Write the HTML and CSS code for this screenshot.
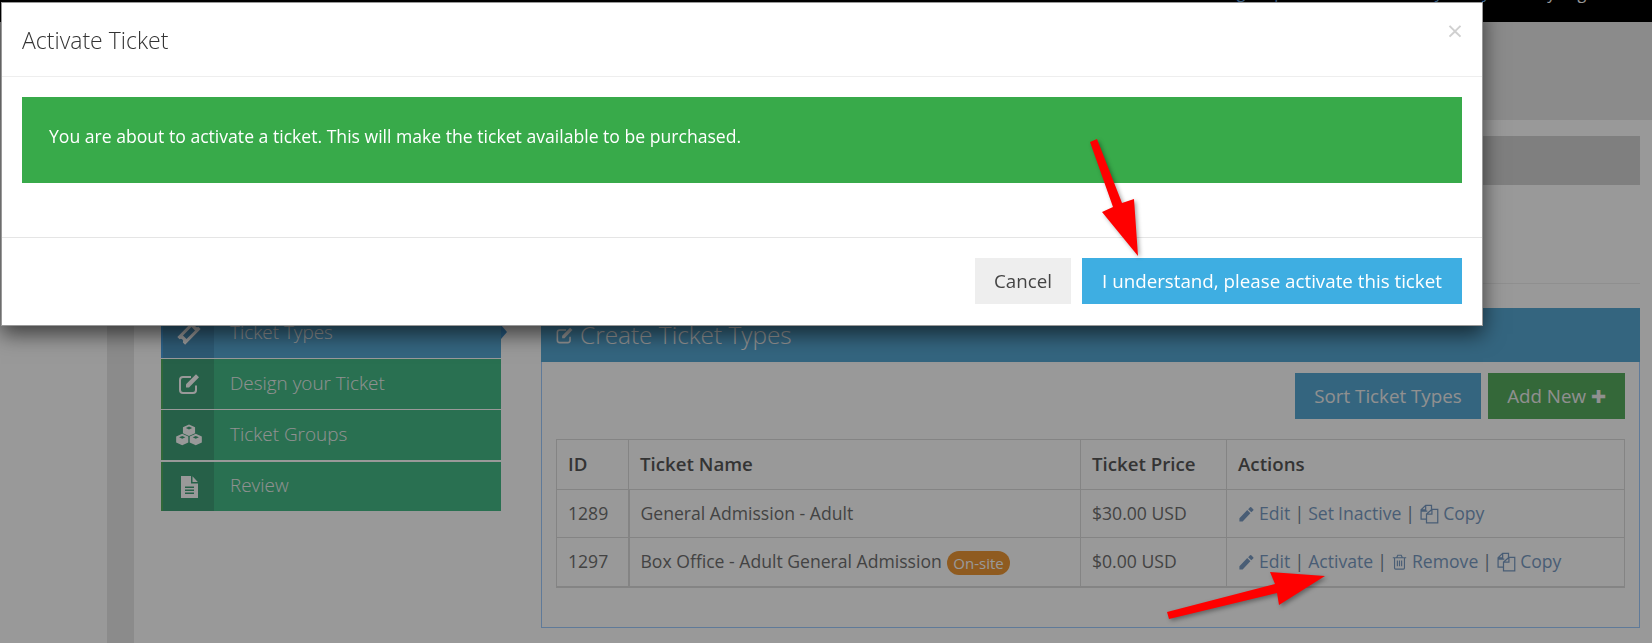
FILE: index.html
```html
<!DOCTYPE html>
<html>
  <head>
    <title>Create Ticket Types</title>
    <link rel="stylesheet" href="styles.css">
  </head>
  <body>
    <!-- Icon set -->
    <svg class="icon-defs" aria-hidden="true">
      <symbol id="i-edit" viewBox="0 0 24 24">
        <path d="M19 13.5V18a3 3 0 0 1-3 3H6a3 3 0 0 1-3-3V8a3 3 0 0 1 3-3h8" fill="none" stroke="currentColor" stroke-width="2"/>
        <path d="M19 2.2l3 3-10 10.3H9v-3.2z" fill="currentColor"/>
      </symbol>
      <symbol id="i-ticket" viewBox="0 0 24 24">
        <path transform="rotate(-45 12 12)" fill-rule="evenodd" fill="currentColor" d="M1 6.5h22v3.2a2.4 2.4 0 0 0 0 4.6v3.2H1v-3.2a2.4 2.4 0 0 0 0-4.6z M6 9.5h12v5H6z"/>
      </symbol>
      <symbol id="i-cubes" viewBox="0 0 24 24" preserveAspectRatio="none">
        <path fill="currentColor" fill-rule="evenodd" d="M12 1.5l5.2 2.7v6L12 13l-5.2-2.8v-6z M12 3.6L9.3 5 12 6.4 14.7 5z"/>
        <path fill="currentColor" fill-rule="evenodd" d="M6.2 10.8l5.2 2.7v6l-5.2 2.8L1 19.5v-6z M6.2 12.9l-2.7 1.4 2.7 1.4 2.7-1.4z"/>
        <path fill="currentColor" fill-rule="evenodd" d="M17.8 10.8l5.2 2.7v6l-5.2 2.8-5.2-2.8v-6z M17.8 12.9l-2.7 1.4 2.7 1.4 2.7-1.4z"/>
      </symbol>
      <symbol id="i-file" viewBox="0 0 24 24">
        <path fill="currentColor" fill-rule="evenodd" d="M4 1h10v7.5h7V23H4z M8 11.5h9V13H8z M8 14.5h9V16H8z M8 17.5h9V19H8z"/>
        <path fill="currentColor" d="M15.5 1.2l5.3 5.8h-5.3z"/>
      </symbol>
      <symbol id="i-pencil" viewBox="0 0 24 24">
        <path fill="currentColor" d="M2 18v4.500h4.500L17.500 11 13 6.500z M14.300 5.200l4.500 4.500 2.700-2.700a1.200 1.200 0 0 0 0-1.700l-2.800-2.800a1.200 1.200 0 0 0-1.700 0z"/>
      </symbol>
      <symbol id="i-files" viewBox="0 0 24 24">
        <path fill="none" stroke="currentColor" stroke-width="1.500" d="M10 8.500H2.500V7L8 1.500h7v5.500 M8 1.500V7H2.500 M2.500 8.500V18H9"/>
        <path fill="none" stroke="currentColor" stroke-width="1.500" d="M15.500 6.500H22.500V22.500H9V12z M15.500 6.500V12H9"/>
      </symbol>
      <symbol id="i-trash" viewBox="0 0 24 24">
        <path fill="none" stroke="currentColor" stroke-width="1.600" d="M2.500 6h19 M8 6l1.500-3.500h5L16 6 M5 6v14.500a1.500 1.500 0 0 0 1.500 1.500h11a1.500 1.500 0 0 0 1.500-1.500V6 M9 10v8 M12 10v8 M15 10v8"/>
      </symbol>
    </svg>

    <!-- Page behind the dialog -->
    <div class="topbar">
      <div class="topbar-links">
        <a href="#">Ticketing Help &nbsp; Contact Us &nbsp; Privacy Policy</a>
      </div>
      <div class="topbar-user">My Login</div>
    </div>
    <div class="subheader"></div>

    <div class="page">
      <div class="gutter"></div>
      <div class="strip"></div>
      <div class="content">
        <div class="band"></div>
        <div class="band-space"></div>

        <div class="builder">
          <ul class="steps">
            <li class="step step-active">
              <span class="step-icon"><svg class="icon-md"><use href="#i-ticket"/></svg></span>
              <span class="step-label">Ticket Types</span>
            </li>
            <li class="step">
              <span class="step-icon"><svg class="icon-md"><use href="#i-edit"/></svg></span>
              <span class="step-label">Design your Ticket</span>
            </li>
            <li class="step">
              <span class="step-icon"><svg class="icon-cubes"><use href="#i-cubes"/></svg></span>
              <span class="step-label">Ticket Groups</span>
            </li>
            <li class="step step-last">
              <span class="step-icon"><svg class="icon-md"><use href="#i-file"/></svg></span>
              <span class="step-label">Review</span>
            </li>
          </ul>

          <div class="panel">
            <div class="panel-heading">
              <svg class="icon-heading"><use href="#i-edit"/></svg>
              <span>Create Ticket Types</span>
            </div>
            <div class="panel-body">
              <div class="toolbar">
                <button class="btn btn-sort">Sort Ticket Types</button>
                <button class="btn btn-add">Add New <span class="plus">&#10010;</span></button>
              </div>
              <table class="tickets">
                <thead>
                  <tr>
                    <th class="col-id">ID</th>
                    <th class="col-name">Ticket Name</th>
                    <th class="col-price">Ticket Price</th>
                    <th>Actions</th>
                  </tr>
                </thead>
                <tbody>
                  <tr>
                    <td>1289</td>
                    <td>General Admission - Adult</td>
                    <td>$30.00 USD</td>
                    <td class="actions">
                      <a href="#"><svg class="icon-sm"><use href="#i-pencil"/></svg> Edit</a> |
                      <a href="#">Set Inactive</a> |
                      <a href="#"><svg class="icon-files"><use href="#i-files"/></svg> Copy</a>
                    </td>
                  </tr>
                  <tr>
                    <td>1297</td>
                    <td>Box Office - Adult General Admission <span class="badge">On-site</span></td>
                    <td>$0.00 USD</td>
                    <td class="actions">
                      <a href="#"><svg class="icon-sm"><use href="#i-pencil"/></svg> Edit</a> |
                      <a href="#">Activate</a> |
                      <a href="#"><svg class="icon-sm"><use href="#i-trash"/></svg> Remove</a> |
                      <a href="#"><svg class="icon-files"><use href="#i-files"/></svg> Copy</a>
                    </td>
                  </tr>
                </tbody>
              </table>
            </div>
          </div>
        </div>
      </div>
    </div>

    <!-- Dialog -->
    <div class="backdrop"></div>
    <div class="modal">
      <div class="modal-header">
        <h4 class="modal-title">Activate Ticket</h4>
        <span class="modal-close">&times;</span>
      </div>
      <div class="modal-body">
        <div class="alert">You are about to activate a ticket. This will make the ticket available to be purchased.</div>
      </div>
      <div class="modal-footer">
        <button class="btn btn-cancel">Cancel</button>
        <button class="btn btn-confirm">I understand, please activate this ticket</button>
      </div>
    </div>

    <!-- Red arrows drawn on the screenshot -->
    <svg class="arrows" viewBox="0 0 1652 643">
      <polygon points="1090,142 1097,139 1122,203 1134,199 1138,256 1102,212 1113,207"/>
      <polygon points="1167,612 1275,584 1270,572 1325,576 1279,605 1277,593 1169,619"/>
    </svg>
  </body>
</html>
```

FILE: styles.css
```css
* {
  box-sizing: border-box;
}

html,
body {
  height: 643px;
}

body {
  margin: 0;
  overflow: hidden;
  background-color: #fff;
  color: #707070;
  font-family: "Open Sans", "Liberation Sans", sans-serif;
  font-size: 17.6px;
  line-height: 1.42857;
}

.icon-defs {
  display: none;
}

/* Top bar */
.topbar {
  display: flex;
  justify-content: flex-end;
  height: 22px;
  overflow: hidden;
  background-color: #000;
}

.topbar-links {
  margin: -19px 0 0;
  font-size: 16px;
  white-space: nowrap;
}

.topbar-links a {
  color: #6db3f2;
}

.topbar-user {
  margin: -18px 52px 0 43px;
  color: #fff;
  font-size: 16px;
  white-space: nowrap;
}

.subheader {
  height: 98px;
  background-color: #e8e8e8;
}

/* Page layout */
.page {
  display: flex;
  height: 523px;
}

.gutter {
  width: 107px;
}

.strip {
  width: 27px;
  background-color: #e8e8e8;
}

.content {
  flex: 1;
  padding: 16px 12px 0 27px;
}

.band {
  height: 49px;
  background-color: #d4d4d4;
}

.band-space {
  height: 99px;
  margin-bottom: 24px;
  border-bottom: 1px solid #eee;
}

.builder {
  display: flex;
  gap: 40px;
}

/* Step list */
.steps {
  display: flex;
  flex-direction: column;
  gap: 1px;
  width: 340px;
  margin: 0;
  padding: 0;
  list-style: none;
}

.step {
  display: flex;
  align-items: center;
  gap: 16px;
  height: 50px;
  background-color: #45bb88;
  color: #f2f2f2;
  font-size: 18.9px;
  font-weight: 300;
}

.step-label {
  margin-bottom: 2px;
}

.step-icon {
  display: flex;
  align-items: center;
  justify-content: center;
  align-self: stretch;
  width: 53px;
  border-left: 2px solid #50ad60;
  background-color: #40a078;
  color: #fff;
}

.step-active {
  position: relative;
  background-color: #57a8d4;
}

.step-active .step-icon {
  border-left-color: #4aa0e0;
  background-color: #4c94c0;
}

.step-active::after {
  content: "";
  position: absolute;
  top: 17px;
  right: -6px;
  border-top: 7px solid transparent;
  border-bottom: 7px solid transparent;
  border-left: 6px solid #4098d8;
}

.step-last {
  height: 49px;
  margin-top: 1px;
}

.icon-md {
  width: 24px;
  height: 24px;
}

.icon-cubes {
  width: 28px;
  height: 24px;
}

/* Panel */
.panel {
  flex: 1;
  height: 320px;
  border: 1px solid #9ecbff;
}

.panel-heading {
  display: flex;
  align-items: center;
  gap: 6px;
  height: 54px;
  margin: -1px -1px 0;
  padding-left: 14px;
  background-color: #57a8d4;
  color: #f5f5f5;
  font-size: 24.4px;
  font-weight: 300;
}

.icon-heading {
  width: 19px;
  height: 19px;
}

.panel-body {
  padding: 11px 14px 0;
}

.toolbar {
  display: flex;
  justify-content: flex-end;
  gap: 7px;
  margin-bottom: 20px;
}

.btn {
  height: 46px;
  padding: 0 0 2px;
  border: none;
  font-family: inherit;
  font-size: 18.75px;
  cursor: pointer;
}

.btn-sort {
  width: 186px;
  background-color: #57a8d4;
  color: #f0f0f0;
}

.btn-add {
  width: 137px;
  background-color: #57ad60;
  color: #f0f0f0;
}

.plus {
  font-size: 18px;
}

/* Ticket table */
.tickets {
  width: 100%;
  border-collapse: collapse;
  table-layout: fixed;
  border-bottom: 2px solid #ddd;
}

.tickets th,
.tickets td {
  padding: 0 11px;
  border: 1px solid #ddd;
  text-align: left;
}

.tickets th {
  height: 50px;
  color: #585858;
  font-size: 18.7px;
  font-weight: 600;
}

.tickets td {
  height: 48px;
}

.tickets tr:last-child td {
  height: 49px;
}

.col-id {
  width: 72px;
  border-right-width: 2px;
}

.col-name {
  width: 452px;
}

.col-price {
  width: 146px;
}

.tickets td:first-child {
  border-right-width: 2px;
}

.actions {
  color: #6f7f90;
  word-spacing: -0.5px;
}

.actions a {
  color: #7a9cc4;
  text-decoration: none;
}

.icon-sm {
  width: 17px;
  height: 18px;
  vertical-align: -3px;
}

.icon-files {
  width: 20px;
  height: 20px;
  vertical-align: -4px;
}

.badge {
  display: inline-block;
  height: 24px;
  margin-left: 1px;
  padding: 0 6px;
  border-radius: 12px;
  background-color: #ee9836;
  color: #fff;
  font-size: 15px;
  line-height: 24px;
  vertical-align: -1px;
}

/* Dialog */
.backdrop {
  position: fixed;
  top: 0;
  right: 0;
  bottom: 0;
  left: 0;
  background-color: rgba(0, 0, 0, 0.4);
}

.modal {
  position: absolute;
  top: 2px;
  left: 1px;
  width: 1482px;
  height: 324px;
  border: 1px solid #999;
  background-color: #fff;
  box-shadow: 0 8px 20px rgba(0, 0, 0, 0.6);
}

.modal-header {
  display: flex;
  align-items: center;
  justify-content: space-between;
  height: 74px;
  padding: 0 19px 0 20px;
  border-bottom: 1px solid #eee;
}

.modal-title {
  margin: 2px 0 0;
  color: #333;
  font-size: 23px;
  font-weight: 300;
}

.modal-close {
  margin-bottom: 20px;
  color: #d0d0d0;
  font-size: 28px;
  line-height: 1;
}

.modal-body {
  height: 161px;
  padding: 20px 20px 0;
  border-bottom: 1px solid #e5e5e5;
}

.alert {
  height: 86px;
  padding: 27px;
  background-color: #38aa4a;
  color: #fff;
  font-size: 17.6px;
}

.modal-footer {
  display: flex;
  justify-content: flex-end;
  gap: 11px;
  padding: 20px 20px 0;
}

.btn-cancel {
  width: 96px;
  background-color: #eee;
  color: #444;
}

.btn-confirm {
  width: 380px;
  background-color: #3eaee2;
  color: #fff;
}

/* Annotation arrows */
.arrows {
  position: absolute;
  top: 0;
  left: 0;
  width: 1652px;
  height: 643px;
  fill: #f00;
  filter: drop-shadow(2px 2px 2px rgba(0, 0, 0, 0.35));
}
```
